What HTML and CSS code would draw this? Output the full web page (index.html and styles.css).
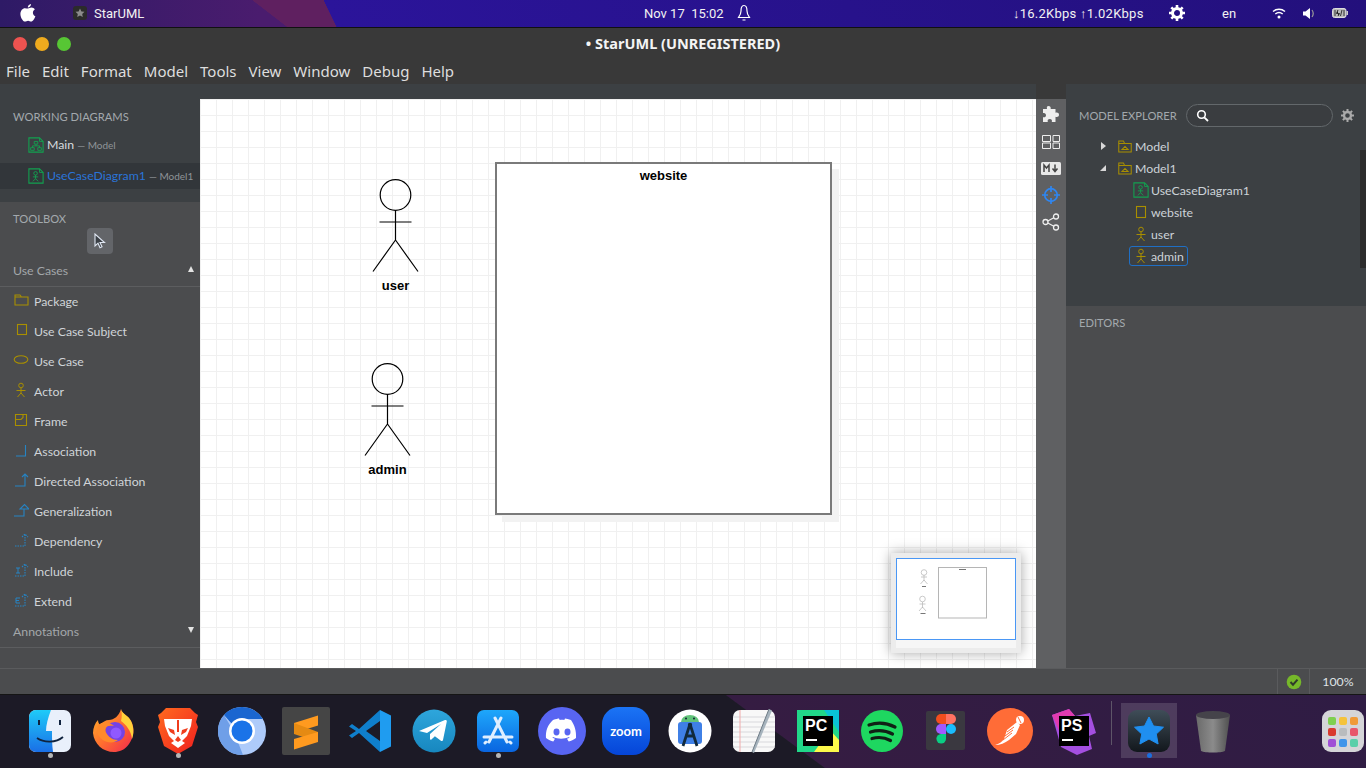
FILE: index.html
```html
<!DOCTYPE html>
<html lang="en">
<head>
  <meta charset="UTF-8" />
  <meta name="viewport" content="width=device-width, initial-scale=1" />
  <title>StarUML</title>
  <link rel="stylesheet" href="styles.css">
</head>
<body>
  <svg class="defs" aria-hidden="true">
    <symbol id="i-actor" viewBox="0 0 16 16"><g fill="none" stroke="currentColor" stroke-width="1"><circle cx="8" cy="3.5" r="2.3"/><path d="M8 6v5M3.5 8.500h9M8 11l-3.500 4M8 11l3.500 4"/></g></symbol>
    <symbol id="i-diagram" viewBox="0 0 18 18"><path d="M1 1h12l4 4v12H1z" fill="none" stroke="#12a150" stroke-width="1.200"/><path d="M13 1v4h4" fill="none" stroke="#12a150"/></symbol>
    <symbol id="i-model" viewBox="0 0 18 16"><g fill="none" stroke="#a98f00" stroke-width="1.300"><path d="M1 15V1h6l1.500 3H17v11z"/><path d="M1 4h7.500M5 12l4-4 4 4z"/></g></symbol>
  </svg>

  <header class="topbar">
    <svg class="apple" width="16" height="18" viewBox="0 0 16 18"><path fill="#fff" d="M11 0c.2 1.500-1.300 3.600-3.200 3.600C7.600 2 9.200.2 11 0zM8 4.600c.8 0 2-1 3.500-1 1.300 0 2.600.7 3.300 1.800-2.800 1.700-2.300 5.600.6 6.800-.8 2.200-2.500 5.400-4.300 5.400-1.200 0-1.600-.8-3-.8s-1.900.8-3 .8C2.800 17.600.4 13.400.4 10c0-3.600 2.300-5.800 4.500-5.800 1.300 0 2.300.4 3.100.4z"/></svg>
    <svg class="app-mini" width="14" height="14" viewBox="0 0 14 14"><rect width="14" height="14" rx="3" fill="#2b2b2b"/><path d="M7 2.500l1.400 2.900 3.100.4-2.300 2.100.6 3.100L7 9.500l-2.800 1.500.6-3.100-2.300-2.100 3.100-.4z" fill="#8c8c8c"/></svg>
    <span class="app-name">StarUML</span>
    <span class="clock">Nov 17&nbsp; 15:02</span>
    <svg class="bell" width="14" height="18" viewBox="0 0 14 18"><path d="M7 1.500c-2.500 0-3 2.500-3 5.500 0 3-1.500 5-2.500 6.500h11C11.500 12 10 10 10 7c0-3-.5-5.500-3-5.500zM5.500 16h3" fill="none" stroke="#fff" stroke-width="1.200"/></svg>
    <span class="netspeed">↓16.2Kbps ↑1.02Kbps</span>
    <svg class="gear" width="16" height="16" viewBox="0 0 16 16"><circle cx="8" cy="8" r="4.500" fill="none" stroke="#fff" stroke-width="3"/><path d="M8 0v3M8 13v3M0 8h3M13 8h3M2.300 2.300l2.100 2.100M11.600 11.600l2.100 2.100M2.300 13.700l2.100-2.100M11.600 4.400l2.100-2.100" stroke="#fff" stroke-width="2.600"/></svg>
    <span class="lang">en</span>
    <svg class="wifi" width="14" height="11" viewBox="0 0 14 11"><path d="M1 3.500c3.500-3 8.500-3 12 0M3.300 6c2.200-1.800 5.200-1.800 7.400 0" fill="none" stroke="#fff" stroke-width="1.500"/><circle cx="7" cy="9" r="1.500" fill="#fff"/></svg>
    <svg class="volume" width="12" height="11" viewBox="0 0 12 11"><path d="M0 3.500h2.500L7 0v11L2.500 7.500H0z" fill="#fff"/><path d="M9 2c1.400 2 1.400 5 0 7" fill="none" stroke="#999" stroke-width="1.200"/></svg>
    <svg class="battery" width="16" height="10" viewBox="0 0 16 10"><rect x=".5" y=".5" width="13.500" height="9" rx="2" fill="#bbb" stroke="#ddd"/><rect x="14.500" y="3" width="1.500" height="4" fill="#ccc"/><path d="M3 2v6M6 2L4.500 5.500h3L6 8M10 2l-1.500 6M12 2v6" stroke="#333" stroke-width="1"/></svg>
  </header>

  <div class="window">
    <div class="titlebar">
      <span class="light red"></span><span class="light orange"></span><span class="light green"></span>
      <span class="title">• StarUML (UNREGISTERED)</span>
    </div>
    <nav class="menubar">
      <span>File</span><span>Edit</span><span>Format</span><span>Model</span><span>Tools</span><span>View</span><span>Window</span><span>Debug</span><span>Help</span>
    </nav>

    <div class="workspace">
      <aside class="left">
        <section class="working">
          <div class="label">WORKING DIAGRAMS</div>
          <div class="wd-row">
            <svg width="16" height="18" viewBox="0 0 18 18"><use href="#i-diagram"/><path d="M7 5h4v3H7zM3 12h4v3H3zM11 12h4v3h-4zM9 8v2M5 12v-2h8v2" fill="none" stroke="#12a150"/></svg>
            <span class="wd-name">Main</span><span class="wd-owner">— Model</span>
          </div>
          <div class="wd-row active">
            <svg width="16" height="18" viewBox="0 0 18 18"><use href="#i-diagram"/><g fill="none" stroke="#12a150"><circle cx="8.500" cy="6" r="2"/><path d="M8.500 8v4M5.500 10h6M8.500 12l-3 3M8.500 12l3 3"/></g></svg>
            <span class="wd-name">UseCaseDiagram1</span><span class="wd-owner">— Model1</span>
          </div>
        </section>

        <section class="toolbox">
          <div class="label">TOOLBOX</div>
          <div class="tool-select">
            <svg width="12" height="16" viewBox="0 0 12 16"><path d="M1 1v12l3-2.800 2 4.500 2-.9-2-4.300h4.500z" fill="#3b4046" stroke="#dfe6f2" stroke-width="1.100"/></svg>
          </div>
          <div class="group-head"><span>Use Cases</span><i class="tri up"></i></div>
          <ul class="tools">
            <li><svg width="16" height="16" viewBox="0 0 16 16"><path d="M2 13V3h5l1.500 2H15v8zM2 5h6.500" fill="none" stroke="#a98f00" stroke-width="1.100"/></svg>Package</li>
            <li><svg width="16" height="16" viewBox="0 0 16 16"><rect x="4.500" y="2.500" width="9" height="10" fill="none" stroke="#a98f00" stroke-width="1.100"/></svg>Use Case Subject</li>
            <li><svg width="16" height="16" viewBox="0 0 16 16"><ellipse cx="8" cy="7.500" rx="6.800" ry="3.800" fill="none" stroke="#a98f00" stroke-width="1.100"/></svg>Use Case</li>
            <li class="yellow"><svg width="16" height="16"><use href="#i-actor"/></svg>Actor</li>
            <li><svg width="16" height="16" viewBox="0 0 16 16"><path d="M2.500 2.500h11v11h-11zM2.500 7.500H8l2-2V2.500" fill="none" stroke="#a98f00" stroke-width="1.100"/></svg>Frame</li>
            <li><svg width="16" height="16" viewBox="0 0 16 16"><path d="M3 14h9.500V3" fill="none" stroke="#2684c4" stroke-width="1.100"/></svg>Association</li>
            <li><svg width="16" height="16" viewBox="0 0 16 16"><path d="M2 14h10V2M9 5l3-3 3 3" fill="none" stroke="#2684c4" stroke-width="1.100"/></svg>Directed Association</li>
            <li><svg width="16" height="16" viewBox="0 0 16 16"><path d="M1 14h10V7H7l4.500-4.500L16 7h-5" fill="none" stroke="#2684c4" stroke-width="1.100"/></svg>Generalization</li>
            <li><svg width="16" height="16" viewBox="0 0 16 16"><path d="M2 14h10V2M9 5l3-3 3 3" fill="none" stroke="#2684c4" stroke-width="1.100" stroke-dasharray="1.500 1"/></svg>Dependency</li>
            <li><svg width="16" height="16" viewBox="0 0 16 16"><path d="M2 14h10V2M9 5l3-3 3 3" fill="none" stroke="#2684c4" stroke-width="1.100" stroke-dasharray="1.500 1"/><path d="M3 6h4M5 6v5M3 11h4" fill="none" stroke="#2684c4"/></svg>Include</li>
            <li><svg width="16" height="16" viewBox="0 0 16 16"><path d="M2 14h10V2M9 5l3-3 3 3" fill="none" stroke="#2684c4" stroke-width="1.100" stroke-dasharray="1.500 1"/><path d="M7 6H3v5h4M3 8.500h3" fill="none" stroke="#2684c4"/></svg>Extend</li>
          </ul>
          <div class="group-head"><span>Annotations</span><i class="tri down"></i></div>
        </section>
      </aside>

      <main class="canvas-wrap">
        <div class="canvas">
          <svg class="actor actor-user" width="48" height="96" viewBox="0 0 48 96"><g fill="none" stroke="#000" stroke-width="1.200"><circle cx="23.500" cy="16" r="15.300"/><path d="M23.500 31v30M7.500 43h32M23.500 61L1 92.500M23.500 61L46 92.500"/></g></svg>
          <div class="actor-name name-user">user</div>
          <svg class="actor actor-admin" width="48" height="96" viewBox="0 0 48 96"><g fill="none" stroke="#000" stroke-width="1.200"><circle cx="23.500" cy="16" r="15.300"/><path d="M23.500 31v30M7.500 43h32M23.500 61L1 92.500M23.500 61L46 92.500"/></g></svg>
          <div class="actor-name name-admin">admin</div>
          <div class="subject"><span>website</span></div>

          <div class="minimap">
            <div class="mini-view">
              <svg width="118" height="80" viewBox="0 0 118 80"><g fill="none" stroke="#bbb" stroke-width=".8"><circle cx="27" cy="13.500" r="2.800"/><path d="M27 16v6M24 18h6M27 21l-3.500 4M27 21l3.500 4"/><circle cx="25.500" cy="40" r="2.800"/><path d="M25.500 43v6M22.500 45h6M25.500 48l-3.500 4M25.500 48l3.500 4"/></g><path d="M25 27.500h4M23.500 54.500h5" stroke="#777"/><rect x="41.500" y="8.500" width="48" height="50.500" fill="#fff" stroke="#b5b5b5"/><path d="M62 10.500h7" stroke="#777"/></svg>
            </div>
          </div>
        </div>
      </main>

      <div class="sidebar-icons">
        <svg width="18" height="18" viewBox="0 0 18 18"><path fill="#eee" d="M6.500 1c1.600 0 2.500 1 2.200 3h4.800v3.800c1.800-.6 3.500.2 3.500 2s-1.700 2.700-3.500 2V17H9.800c.6-1.800-.3-3-2-3s-2.600 1.200-2 3H1v-4.800c2 .6 3-.6 3-2S3 7.500 1 8V4h4c-.5-2 0-3 1.500-3z"/></svg>
        <svg width="18" height="14" viewBox="0 0 18 14"><path fill="none" stroke="#eee" d="M.5.500h8v6h-8zM11 .5h6.500v6H11zM.5 8h8v5.500h-8zM11 8h6.500v5.500H11z"/></svg>
        <svg width="20" height="13" viewBox="0 0 20 13"><rect width="20" height="13" rx="1.500" fill="#e8e8e8"/><path d="M3 10V3l2.500 3L8 3v7" fill="none" stroke="#444" stroke-width="1.500"/><path d="M14 2.500v6M11.500 6.500l2.500 3 2.500-3" fill="none" stroke="#444" stroke-width="1.500"/></svg>
        <svg width="20" height="20" viewBox="0 0 20 20"><circle cx="10" cy="10" r="6.300" fill="none" stroke="#2f86f0" stroke-width="1.700"/><path d="M10 1v6M10 13v6M1 10h6M13 10h6" stroke="#2f86f0" stroke-width="1.700"/></svg>
        <svg width="18" height="18" viewBox="0 0 18 18"><g fill="none" stroke="#eee" stroke-width="1.300"><circle cx="3.500" cy="9" r="2.500"/><circle cx="14" cy="3.500" r="2.500"/><circle cx="14" cy="14.500" r="2.500"/><path d="M5.800 8l6-3.200M5.800 10l6 3.200"/></g></svg>
      </div>

      <aside class="right">
        <section class="explorer">
          <div class="explorer-head">
            <span class="label">MODEL EXPLORER</span>
            <div class="search"><svg width="13" height="13" viewBox="0 0 13 13"><circle cx="5.500" cy="5.500" r="3.800" fill="none" stroke="#fff" stroke-width="1.600"/><path d="M8.300 8.300L12 12" stroke="#fff" stroke-width="1.800"/></svg></div>
            <svg class="cog" width="13" height="13" viewBox="0 0 13 13"><circle cx="6.500" cy="6.500" r="3.500" fill="none" stroke="#aaa" stroke-width="2.400"/><path d="M6.500 0v2.500M6.500 10.500V13M0 6.500h2.500M10.500 6.500H13M1.900 1.900l1.800 1.800M9.300 9.300l1.800 1.800M1.900 11.100l1.800-1.800M9.300 3.700l1.800-1.800" stroke="#aaa" stroke-width="2"/></svg>
          </div>
          <div class="tree">
            <div class="tree-row root"><i class="caret closed"></i><svg width="14" height="13"><use href="#i-model"/></svg><span>Model</span></div>
            <div class="tree-row root"><i class="caret open"></i><svg width="14" height="13"><use href="#i-model"/></svg><span>Model1</span></div>
            <div class="tree-row"><div class="tree-item"><svg width="16" height="16" viewBox="0 0 18 18"><use href="#i-diagram"/><g fill="none" stroke="#12a150"><circle cx="8.500" cy="6" r="2"/><path d="M8.500 8v4M5.500 10h6M8.500 12l-3 3M8.500 12l3 3"/></g></svg><span>UseCaseDiagram1</span></div></div>
            <div class="tree-row"><div class="tree-item"><svg width="16" height="16" viewBox="0 0 16 16"><rect x="3.500" y="2.500" width="9" height="11" fill="none" stroke="#a98f00" stroke-width="1.100"/></svg><span>website</span></div></div>
            <div class="tree-row"><div class="tree-item yellow"><svg width="16" height="16"><use href="#i-actor"/></svg><span>user</span></div></div>
            <div class="tree-row"><div class="tree-item yellow selected"><svg width="16" height="16"><use href="#i-actor"/></svg><span>admin</span></div></div>
          </div>
          <div class="scroll-thumb"></div>
        </section>
        <section class="editors"><div class="label">EDITORS</div></section>
      </aside>
    </div>

    <footer class="statusbar">
      <div class="status-cell check"><svg width="16" height="16" viewBox="0 0 16 16"><circle cx="8" cy="8" r="7.300" fill="#76b82a"/><path d="M4.500 8l2.500 2.700 4.500-5" fill="none" stroke="#2f3a2a" stroke-width="2"/></svg></div>
      <div class="status-cell zoom">100%</div>
    </footer>
  </div>

  <div class="dock">
    <!-- finder -->
    <div class="dock-item running"><svg width="48" height="48" viewBox="0 0 48 48"><defs><linearGradient id="g-finder" x1="0" y1="0" x2="0" y2="1"><stop offset="0" stop-color="#1fcbf9"/><stop offset="1" stop-color="#1a6fe6"/></linearGradient></defs><rect x="3" y="3" width="42" height="42" rx="7" fill="#e9f0fb"/><path d="M10 3h15c-3 8-5 15-5 21h6c0 7 0 14 1 21H10a7 7 0 0 1-7-7V10a7 7 0 0 1 7-7z" fill="url(#g-finder)"/><path d="M13 13v5M34 13v5" stroke="#10233f" stroke-width="2"/><path d="M11 31c7 5 19 5 26-1" fill="none" stroke="#10233f" stroke-width="1.800"/></svg></div>
    <!-- firefox -->
    <div class="dock-item"><svg width="48" height="48" viewBox="0 0 48 48"><defs><linearGradient id="g-ff" x1="0" y1="0" x2="1" y2="1"><stop offset="0" stop-color="#ffb52a"/><stop offset=".5" stop-color="#ff6f2f"/><stop offset="1" stop-color="#f0264f"/></linearGradient></defs><path d="M31 2c1 5 7 6 10 12 4 7 3 16-2 23-4 6-10 8-15 8-11 0-20-8-21-19 0-5 2-10 5-13 0 2 1 4 2 5 2-3 6-5 9-5 5 0 10-4 12-11z" fill="url(#g-ff)"/><path d="M31 2c1 5 7 6 10 12 3 6 3 13 1 18-1-9-6-14-11-18 1-4 1-8 0-12z" fill="#ffd23a"/><circle cx="25" cy="25" r="10" fill="#7542e5"/><circle cx="26" cy="26" r="5.500" fill="#9059ff"/><path d="M8 18c5-4 12-3 16 1-5-1-8 0-9 3 1 6 6 11 13 11-6 5-18 2-21-8z" fill="#ff8a2b"/></svg></div>
    <!-- brave -->
    <div class="dock-item running"><svg width="48" height="48" viewBox="0 0 48 48"><defs><linearGradient id="g-brave" x1="0" y1="0" x2="1" y2="1"><stop offset="0" stop-color="#ff6a1f"/><stop offset="1" stop-color="#f01f1f"/></linearGradient></defs><path d="M12 1h24l5 5 3 2-2 7 2 5-6 19-14 8-14-8L4 20l2-5-2-7 3-2z" fill="url(#g-brave)"/><path d="M10 12h28l-1 7-4 10-5 5 3 2-7 5-7-5 3-2-5-5-4-10z" fill="#fff"/><path d="M14 21l6 2 1 5-5-3zM34 21l-6 2-1 5 5-3zM24 29l-3 4 3 2 3-2zM23 13h2v12h-2z" fill="#ef3d1d"/></svg></div>
    <!-- chromium -->
    <div class="dock-item"><svg width="48" height="48" viewBox="0 0 48 48"><circle cx="24" cy="24" r="24" fill="#aecbfa"/><path d="M24 0a24 24 0 0 1 21 12H24a12 12 0 0 0-10 5L6 8A24 24 0 0 1 24 0z" fill="#1a66d0"/><path d="M6 8l10 17 9 23h-1A24 24 0 0 1 6 8z" fill="#6f9fe8"/><circle cx="24" cy="24" r="13" fill="#fff"/><circle cx="24" cy="24" r="10.500" fill="#1a73e8"/></svg></div>
    <!-- sublime -->
    <div class="dock-item"><svg width="48" height="48" viewBox="0 0 48 48"><rect width="48" height="48" rx="2" fill="#454545"/><path d="M36 8.500v10L12 26V16z" fill="#ff9a1f"/><path d="M12 16v11l24 8V25z" fill="#e58a13"/><path d="M36 25v10l-24 7.500V32z" fill="#ff9a1f"/></svg></div>
    <!-- vscode -->
    <div class="dock-item"><svg width="48" height="48" viewBox="0 0 48 48"><path d="M34 3l11 5.500v31L34 45z" fill="#1f9cf0"/><path d="M34 3L13 22l-7-5-3 2.500L10 24l-7 4.500L6 31l7-5 21 19V34L20 24l14-10z" fill="#0f7fcc"/></svg></div>
    <!-- telegram -->
    <div class="dock-item"><svg width="48" height="48" viewBox="0 0 48 48"><defs><linearGradient id="g-tg" x1="0" y1="0" x2="0" y2="1"><stop offset="0" stop-color="#2ea6dc"/><stop offset="1" stop-color="#1787bf"/></linearGradient></defs><circle cx="24" cy="24" r="21.500" fill="url(#g-tg)"/><path d="M9 24l26-11c1-.4 2 .3 1.800 1.500L33 33c-.2 1-1.300 1.400-2.100.800l-6-4.500-3.500 3.200c-.6.500-1.400.2-1.400-.6V27l11-10-14 9z" fill="#fff"/></svg></div>
    <!-- app store -->
    <div class="dock-item running"><svg width="48" height="48" viewBox="0 0 48 48"><defs><linearGradient id="g-as" x1="0" y1="0" x2="0" y2="1"><stop offset="0" stop-color="#1ea7fb"/><stop offset="1" stop-color="#0a65e0"/></linearGradient></defs><rect x="3" y="3" width="42" height="42" rx="7" fill="url(#g-as)"/><path d="M27 11L15 35M21 11l12 24M10 30h28M12 35l-1 1M36 35l1 1" fill="none" stroke="#dfeeff" stroke-width="3" stroke-linecap="round"/></svg></div>
    <!-- discord -->
    <div class="dock-item"><svg width="48" height="48" viewBox="0 0 48 48"><circle cx="24" cy="24" r="24" fill="#5865f2"/><path d="M15 13c3-1 5-1.500 6-1.500l.7 1.500c1.500-.2 3.100-.2 4.600 0l.7-1.500c1.500.2 3.500.6 6 1.500 3.500 5 5.500 11 5 18-2.500 2-5 3-7.300 3.500l-1.700-2.700c1-.3 1.800-.7 2.600-1.200l-.6-.5c-5 2.200-10.800 2.200-16 0l-.6.500c.8.500 1.700.9 2.600 1.200L15.300 34.500C13 34 10.500 33 8 31c-.5-7 1.500-13 7-18z" fill="#fff"/><ellipse cx="18.500" cy="25" rx="3" ry="3.400" fill="#5865f2"/><ellipse cx="29.500" cy="25" rx="3" ry="3.400" fill="#5865f2"/></svg></div>
    <!-- zoom -->
    <div class="dock-item"><svg width="48" height="48" viewBox="0 0 48 48"><defs><linearGradient id="g-zoom" x1="0" y1="0" x2="0" y2="1"><stop offset="0" stop-color="#1b74f5"/><stop offset="1" stop-color="#0545d8"/></linearGradient></defs><rect width="48" height="48" rx="17" fill="url(#g-zoom)"/><text x="24" y="28.500" text-anchor="middle" class="dock-zoom">zoom</text></svg></div>
    <!-- android studio -->
    <div class="dock-item"><svg width="48" height="48" viewBox="0 0 48 48"><circle cx="24" cy="24" r="21.500" fill="#fff"/><path d="M15 15a9 7 0 0 1 18 0z" fill="#62c37a"/><rect x="12" y="15" width="24" height="22" rx="3" fill="#3f80e6"/><circle cx="20" cy="11.500" r="1" fill="#123"/><circle cx="28" cy="11.500" r="1" fill="#123"/><path d="M24 17l-7 22M24 17l7 22M19 29h10" fill="none" stroke="#112a3c" stroke-width="2.800"/><circle cx="24" cy="18" r="2.200" fill="#112a3c"/></svg></div>
    <!-- textedit -->
    <div class="dock-item"><svg width="48" height="48" viewBox="0 0 48 48"><rect x="3" y="3" width="42" height="42" rx="7" fill="#f8f8f8"/><path d="M3 10h42M3 15h42M3 20h42M3 25h42M3 30h42M3 35h42M3 40h42" stroke="#d8d8dc"/><path d="M10 3v42" stroke="#f0a9a9"/><path d="M39 2l3 1.500L24 46l-2-1z" fill="#a6b3bd"/><path d="M39 2L22 45" stroke="#6d7a85"/></svg></div>
    <!-- pycharm -->
    <div class="dock-item"><svg width="48" height="48" viewBox="0 0 48 48"><rect x="3" y="3" width="42" height="42" fill="#21d789"/><path d="M14 3h31v22L30 3z" fill="#09c2d6"/><path d="M45 45H20l16-22 9 10z" fill="#fcf84a"/><rect x="9" y="9" width="30" height="30" fill="#000"/><text x="11" y="24" class="dock-ide">PC</text><path d="M12 33h11" stroke="#fff" stroke-width="2"/></svg></div>
    <!-- spotify -->
    <div class="dock-item"><svg width="48" height="48" viewBox="0 0 48 48"><circle cx="24" cy="24" r="21" fill="#1ed760"/><path d="M11 18c9-3 18-2 26 2M12.500 25c7.500-2.300 15.500-1.500 22 2M14 31.500c6.500-1.800 13-1 18.500 2" fill="none" stroke="#102015" stroke-width="3.200" stroke-linecap="round"/></svg></div>
    <!-- figma -->
    <div class="dock-item"><svg width="48" height="48" viewBox="0 0 48 48"><rect x="4" y="4" width="39" height="39" rx="2" fill="#3a3840"/><path d="M24 7h-5a4.700 4.700 0 0 0 0 10h5z" fill="#f24e1e"/><path d="M24 7h5a4.700 4.700 0 0 1 0 10h-5z" fill="#ff7262"/><path d="M24 17h-5a4.700 4.700 0 0 0 0 10h5z" fill="#a259ff"/><circle cx="29" cy="22" r="5" fill="#1abcfe"/><path d="M24 27h-5a4.800 4.800 0 1 0 5 5z" fill="#0acf83"/></svg></div>
    <!-- postman -->
    <div class="dock-item"><svg width="48" height="48" viewBox="0 0 48 48"><circle cx="24" cy="24" r="23" fill="#ff6c37"/><path d="M9 38c4-1 7-3 9-6l3-9 10-8 3 3-4 9-7 6c-4 3-9 5-14 5z" fill="#fff"/><circle cx="34" cy="13" r="4" fill="#fff"/><path d="M17 33l9-7M19 29l8-6M21 25l7-5M32 10l3 6" stroke="#ff6c37"/></svg></div>
    <!-- phpstorm -->
    <div class="dock-item"><svg width="48" height="48" viewBox="0 0 48 48"><path d="M2 8l17-6 6 7 15-3 6 20-7 3 3 13-15 6-16-8z" fill="#a44fe0"/><path d="M2 8l17-6 6 7-12 24z" fill="#e03bb0"/><rect x="9" y="9" width="30" height="30" fill="#000"/><text x="11" y="24" class="dock-ide">PS</text><path d="M12 33h11" stroke="#fff" stroke-width="2"/></svg></div>
    <div class="dock-sep"></div>
    <!-- staruml -->
    <div class="dock-item current"><svg width="48" height="48" viewBox="0 0 48 48"><defs><linearGradient id="g-su" x1="0" y1="0" x2="0" y2="1"><stop offset="0" stop-color="#3f4d58"/><stop offset="1" stop-color="#12171c"/></linearGradient></defs><rect x="3" y="3" width="42" height="42" rx="9" fill="url(#g-su)"/><path d="M24 10l4.500 9 10 1.200-7.200 6.800 1.800 10L24 32l-9.100 5 1.800-10-7.200-6.800 10-1.200z" fill="#1f8ff0" stroke="#1f8ff0" stroke-linejoin="round"/></svg></div>
    <!-- trash -->
    <div class="dock-item"><svg width="48" height="48" viewBox="0 0 48 48"><defs><linearGradient id="g-tr" x1="0" y1="0" x2="1" y2="0"><stop offset="0" stop-color="#6a6a6a"/><stop offset=".5" stop-color="#8b8b8b"/><stop offset="1" stop-color="#4f4f4f"/></linearGradient></defs><path d="M7 8l5 36c4 2 20 2 24 0l5-36z" fill="url(#g-tr)"/><ellipse cx="24" cy="8" rx="17" ry="4" fill="#45434a"/></svg></div>
    <!-- launchpad -->
    <div class="dock-item launchpad"><svg width="44" height="48" viewBox="0 0 44 48"><rect x="1" y="3" width="42" height="42" rx="9" fill="#d5d5d8"/><rect x="7" y="10" width="8" height="8" rx="2" fill="#7fd04f"/><rect x="18" y="10" width="8" height="8" rx="2" fill="#f5c33b"/><rect x="29" y="10" width="8" height="8" rx="2" fill="#f09a38"/><rect x="7" y="21" width="8" height="8" rx="2" fill="#d93a2e"/><rect x="18" y="21" width="8" height="8" rx="2" fill="#b9bcbe"/><rect x="29" y="21" width="8" height="8" rx="2" fill="#e8566b"/><rect x="7" y="32" width="8" height="8" rx="2" fill="#a04fd6"/><rect x="18" y="32" width="8" height="8" rx="2" fill="#3f95ea"/><rect x="29" y="32" width="8" height="8" rx="2" fill="#59cfa9"/></svg></div>
  </div>
</body>
</html>
```

FILE: styles.css
```css
* {
  box-sizing: border-box;
}

html,
body {
  margin: 0;
  height: 768px;
  overflow: hidden;
}

body {
  width: 1366px;
  background: #1c1a26;
  font-family: "Lato", "Noto Sans", sans-serif;
  font-size: 12.300px;
  white-space: nowrap;
  color: #d0d4d8;
}

.defs {
  position: absolute;
  width: 0;
  height: 0;
}

svg {
  display: block;
  flex: none;
}

.yellow {
  color: #a98f00;
}

/* top bar */
.topbar {
  display: flex;
  align-items: center;
  height: 28px;
  padding-bottom: 1px;
  border-bottom: 1px solid #111;
  color: #f2f2f2;
  font-family: "Roboto", sans-serif;
  font-size: 13px;
  background:
    linear-gradient(64.300deg, transparent 303px, #2b149a 303.500px, #23107c 100%),
    linear-gradient(37.600deg, transparent 175px, #5f2060 175.500px),
    linear-gradient(90deg, #2e1a66, #4a1c6e 260px);
}

.apple { margin-left: 20px; }
.app-mini { margin-left: 37px; }
.app-name { margin-left: 7px; width: 50px; }
.clock { margin-left: 500px; width: 78px; }
.bell { margin-left: 15px; }
.netspeed { margin-left: 262px; width: 132px; letter-spacing: 0.250px; }
.gear { margin-left: 24px; }
.lang { margin-left: 37px; width: 14px; }
.wifi { margin-left: 36px; }
.volume { margin-left: 17px; }
.battery { margin-left: 17px; }

/* window */
.window {
  height: 667px;
  display: flex;
  flex-direction: column;
  background: #393939;
}

.titlebar {
  position: relative;
  display: flex;
  align-items: center;
  gap: 8px;
  height: 30px;
  padding-left: 13px;
  padding-top: 2px;
}

.light {
  width: 14px;
  height: 14px;
  border-radius: 50%;
}

.red { background: #ee5350; }
.orange { background: #efab1e; }
.green { background: #57c634; }

.title {
  position: absolute;
  left: 0;
  right: 0;
  margin-top: -2px;
  text-align: center;
  font-family: "Noto Sans", sans-serif;
  font-size: 14.500px;
  font-weight: 700;
  color: #f4f4f4;
}

.menubar {
  display: flex;
  align-items: center;
  gap: 12px;
  height: 26px;
  padding-left: 6px;
  font-family: "Noto Sans", sans-serif;
  font-size: 15px;
  color: #dedede;
}

.workspace {
  flex: 1;
  display: grid;
  grid-template-columns: 200px 836px 30px 300px;
  min-height: 0;
}

.label {
  color: #a3a9ad;
  font-size: 11.200px;
}

/* left column */
.left {
  display: flex;
  flex-direction: column;
}

.working {
  height: 118px;
  padding-top: 24px;
  background: #3c4043;
}

.working .label {
  height: 17px;
  line-height: 17px;
  padding-left: 13px;
  margin-bottom: 7px;
}

.wd-row {
  display: flex;
  align-items: center;
  height: 26px;
  padding-left: 28px;
  margin-bottom: 5px;
  padding-bottom: 1px;
}

.wd-row svg {
  margin-right: 3px;
}

.wd-name {
  color: #d8dcdf;
}

.wd-owner {
  margin-left: 3px;
  font-size: 10px;
  color: #8f9498;
}

.wd-row.active {
  background: #32363a;
}

.wd-row.active .wd-name {
  color: #2a74d8;
}

.toolbox {
  flex: 1;
  background: #4b4c4e;
  padding-top: 8px;
}

.toolbox .label {
  height: 18px;
  line-height: 18px;
  padding-left: 13px;
}

.tool-select {
  display: flex;
  align-items: center;
  justify-content: center;
  width: 26px;
  height: 26px;
  margin: 0 0 2px 87px;
  border-radius: 4px;
  background: #636569;
}

.group-head {
  display: flex;
  align-items: center;
  justify-content: space-between;
  height: 31px;
  padding: 0 6px 1px 13px;
  border-bottom: 1px solid #5c5d5f;
  color: #a3a7aa;
}

.tri {
  width: 0;
  height: 0;
  border-left: 3.500px solid transparent;
  border-right: 3.500px solid transparent;
}

.tri.up { border-bottom: 6px solid #e4e4e4; margin-top: -4px; }
.tri.down { border-top: 6px solid #e4e4e4; margin-top: -4px; }

.tools {
  list-style: none;
  margin: 0;
  padding: 0;
}

.tools li {
  display: flex;
  align-items: center;
  gap: 5px;
  height: 30px;
  padding-left: 13px;
  padding-bottom: 1px;
  color: #d0d4d8;
}

.tools li svg {
  margin-top: -3px;
  color: #a98f00;
}

/* canvas */
.canvas-wrap {
  padding-top: 15px;
  background: #3c4043;
}

.canvas {
  position: relative;
  height: 100%;
  background-color: #fff;
  background-image:
    linear-gradient(to right, #f0f0f0 1px, transparent 1px),
    linear-gradient(to bottom, #f0f0f0 1px, transparent 1px);
  background-size: 16px 16px;
}

.actor {
  position: absolute;
}

.actor-user { left: 172px; top: 80px; }
.actor-admin { left: 164px; top: 264px; }

.actor-name {
  position: absolute;
  width: 80px;
  text-align: center;
  font-family: "Liberation Sans", sans-serif;
  font-size: 13px;
  font-weight: 700;
  color: #000;
}

.name-user { left: 155.500px; top: 179px; }
.name-admin { left: 147.500px; top: 363px; }

.subject {
  position: absolute;
  left: 295px;
  top: 63px;
  width: 337px;
  height: 353px;
  padding-top: 4px;
  border: 2px solid #7a7a7a;
  background: #fff;
  box-shadow: 7px 7px 0 #f2f2f2;
  text-align: center;
  font-family: "Liberation Sans", sans-serif;
  font-size: 13px;
  font-weight: 700;
  color: #000;
}

.minimap {
  position: absolute;
  left: 691px;
  top: 454px;
  width: 130px;
  height: 100px;
  padding: 5px;
  background: #ececec;
  box-shadow: 0 0 12px rgba(0, 0, 0, 0.35);
}

.mini-view {
  width: 120px;
  height: 82px;
  border: 1px solid #4a97f5;
  background: #fff;
  box-shadow: 0 8px 0 #f6f6f6;
}

/* icon strip */
.sidebar-icons {
  display: flex;
  flex-direction: column;
  align-items: center;
  margin-top: 15px;
  padding-top: 6px;
  background: #5f6062;
}

.sidebar-icons svg:nth-child(1) { margin-bottom: 12px; }
.sidebar-icons svg:nth-child(2) { margin-bottom: 13px; }
.sidebar-icons svg:nth-child(3) { margin-bottom: 10px; }
.sidebar-icons svg:nth-child(4) { margin-bottom: 8px; }

/* right column */
.right {
  display: flex;
  flex-direction: column;
}

.explorer {
  position: relative;
  height: 222px;
  background: #3c4043;
}

.explorer-head {
  display: flex;
  align-items: center;
  height: 51px;
  padding: 20px 0 8px 13px;
}

.explorer-head .label {
  width: 100px;
}

.search {
  display: flex;
  align-items: center;
  width: 147px;
  height: 23px;
  margin-left: 7px;
  padding-left: 9px;
  border: 1px solid #63686b;
  border-radius: 12px;
  background: #3a3d40;
}

.cog {
  margin-left: 8px;
}

.tree-row {
  display: flex;
  align-items: center;
  height: 22px;
  padding-left: 63px;
  color: #cdd3d8;
}

.tree-row.root {
  padding-left: 34px;
}

.tree-row.root span {
  margin-left: 3px;
}

.caret {
  display: block;
  width: 18px;
}

.caret.closed::before {
  content: "";
  display: block;
  width: 0;
  height: 0;
  margin-left: 1px;
  border-left: 5px solid #d8d8d8;
  border-top: 4px solid transparent;
  border-bottom: 4px solid transparent;
}

.caret.open::before {
  content: "";
  display: block;
  width: 0;
  height: 0;
  border-bottom: 6px solid #d8d8d8;
  border-left: 6px solid transparent;
}

.tree-item {
  display: flex;
  align-items: center;
  gap: 2px;
  height: 20px;
  padding: 0 3px;
  border: 1px solid transparent;
  border-radius: 3px;
}

.tree-item span {
  color: #cdd3d8;
}

.tree-item.selected {
  border-color: #1f6fc5;
}

.scroll-thumb {
  position: absolute;
  right: 0;
  top: 66px;
  width: 6px;
  height: 118px;
  background: #2c2c2c;
}

.editors {
  flex: 1;
  padding: 10px 13px;
  background: #4b4c4e;
}

/* status bar */
.statusbar {
  display: flex;
  justify-content: flex-end;
  height: 27px;
  border-top: 1px solid #5a5b5d;
  border-bottom: 1px solid #151515;
  background: #4b4c4e;
}

.status-cell {
  display: flex;
  align-items: center;
  justify-content: center;
  border-left: 1px solid #5a5b5d;
}

.status-cell.check { width: 32px; }
.status-cell.zoom { width: 57px; color: #dfe3e6; }

/* dock */
.dock {
  display: flex;
  height: 73px;
  padding: 12px 0 0 18px;
  background: linear-gradient(36.400deg, #1c1a26 0, #1c1a26 489px, #351c42 490px, #2f1c44 100%);
}

.dock-item {
  position: relative;
  display: flex;
  justify-content: center;
  width: 64px;
  height: 48px;
}

.dock-item.running::after,
.dock-item.current::after {
  content: "";
  position: absolute;
  left: 50%;
  top: 46px;
  width: 5px;
  height: 5px;
  margin-left: -2.500px;
  border-radius: 50%;
  background: #b5b5b5;
}

.dock-item.current::before {
  content: "";
  position: absolute;
  left: 4px;
  top: -4px;
  width: 56px;
  height: 55px;
  background: rgba(255, 255, 255, 0.14);
}

.dock-item.current svg {
  position: relative;
}

.dock-item.current::after {
  background: #1a6fe0;
}

.dock-sep {
  width: 1px;
  height: 44px;
  margin: -6px 5px 0 5px;
  background: #5e5568;
}

.dock-item.launchpad {
  width: 46px;
  margin-left: auto;
}

.dock-zoom {
  font-family: "Lato", sans-serif;
  font-size: 13px;
  font-weight: 700;
  fill: #fff;
}

.dock-ide {
  font-family: "Liberation Sans", sans-serif;
  font-size: 16px;
  font-weight: 700;
  fill: #fff;
}
```
